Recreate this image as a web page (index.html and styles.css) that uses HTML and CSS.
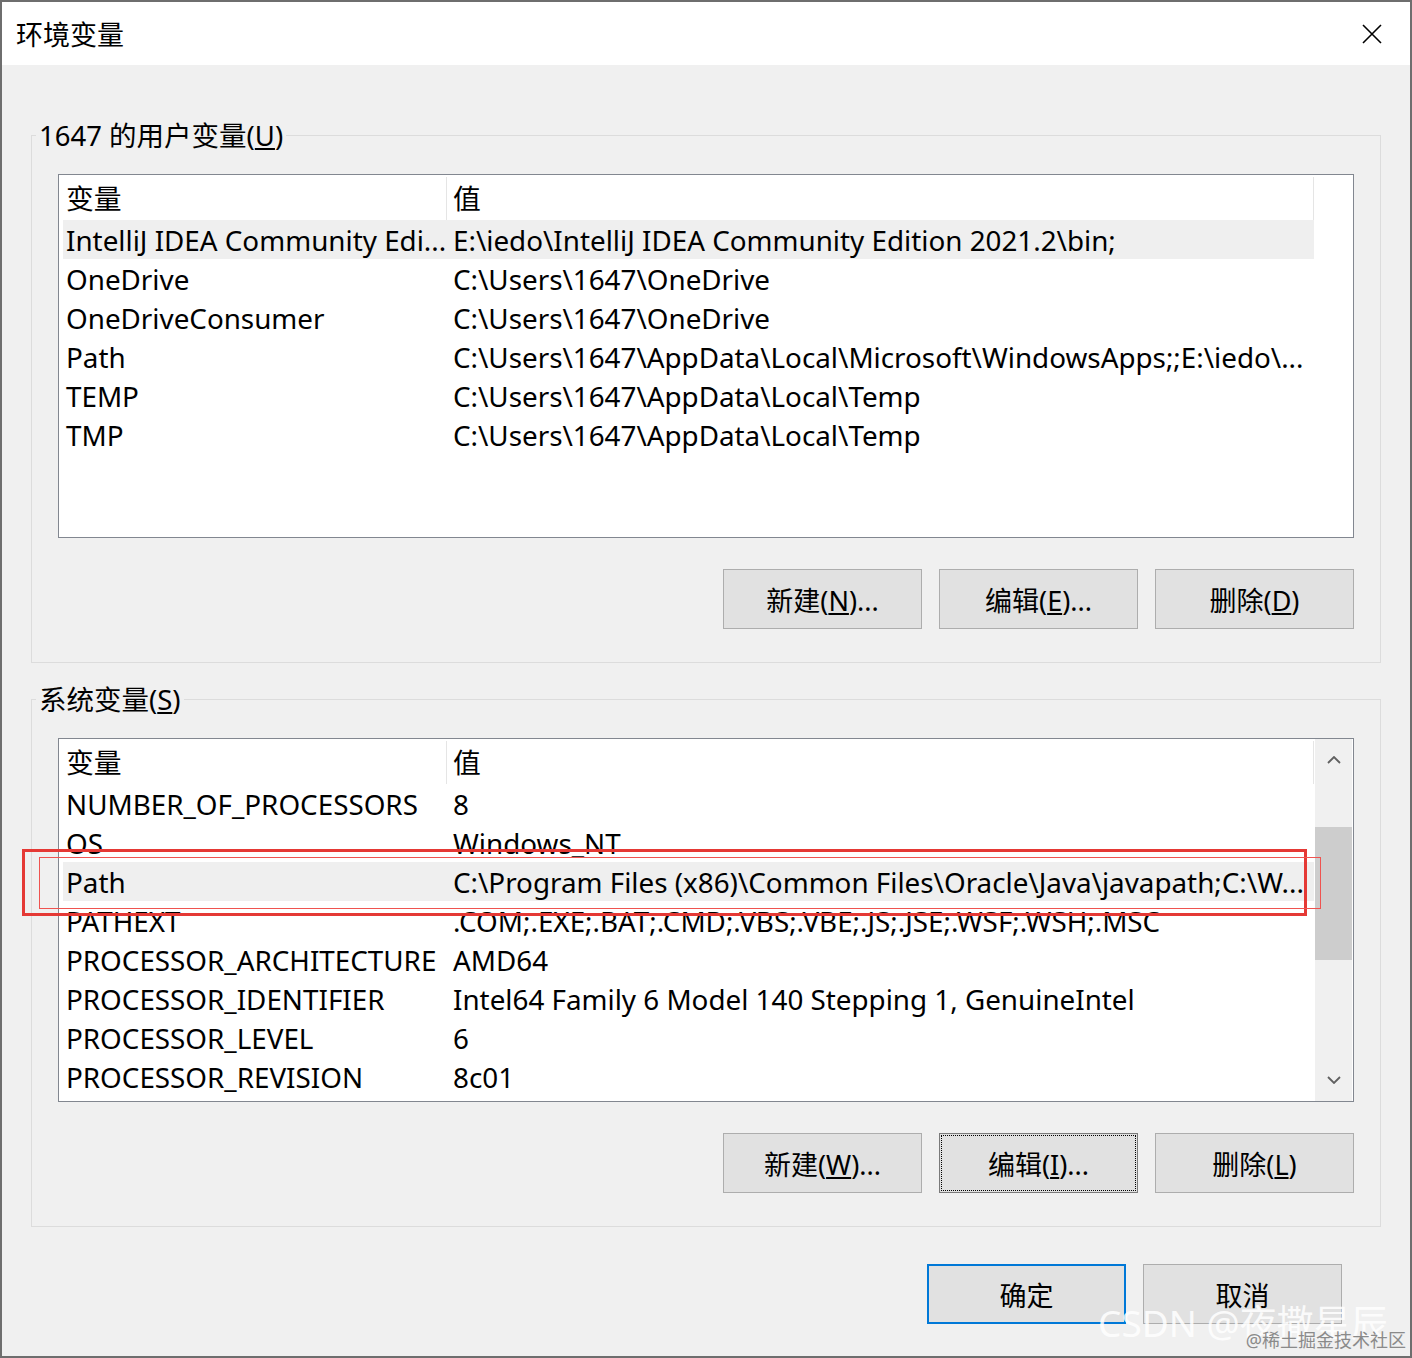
FILE: index.html
```html
<!DOCTYPE html>
<html lang="zh-CN">
<head>
  <meta charset="UTF-8" />
  <title>环境变量</title>
  <link rel="stylesheet" href="styles.css">
</head>
<body>
  <div class="window">
    <div class="titlebar">
      <span class="title">环境变量</span>
      <svg class="close" width="20" height="20" viewBox="0 0 20 20">
        <path d="M1 1 L19 19 M19 1 L1 19" stroke="#000" stroke-width="1.6" fill="none" />
      </svg>
    </div>

    <div class="dialog-body">
      <!-- User variables -->
      <fieldset class="group">
        <legend>1647 的用户变量(<u>U</u>)</legend>
        <div class="list">
          <div class="list-main">
            <div class="list-head">
              <div class="head-name">变量</div>
              <div class="head-value">值</div>
            </div>
            <div class="row selected"><span>IntelliJ IDEA Community Edi...</span><span>E:\iedo\IntelliJ IDEA Community Edition 2021.2\bin;</span></div>
            <div class="row"><span>OneDrive</span><span>C:\Users\1647\OneDrive</span></div>
            <div class="row"><span>OneDriveConsumer</span><span>C:\Users\1647\OneDrive</span></div>
            <div class="row"><span>Path</span><span>C:\Users\1647\AppData\Local\Microsoft\WindowsApps;;E:\iedo\...</span></div>
            <div class="row"><span>TEMP</span><span>C:\Users\1647\AppData\Local\Temp</span></div>
            <div class="row"><span>TMP</span><span>C:\Users\1647\AppData\Local\Temp</span></div>
          </div>
        </div>
        <div class="actions">
          <button class="btn">新建(<u>N</u>)...</button>
          <button class="btn">编辑(<u>E</u>)...</button>
          <button class="btn">删除(<u>D</u>)</button>
        </div>
      </fieldset>

      <!-- System variables -->
      <fieldset class="group">
        <legend>系统变量(<u>S</u>)</legend>
        <div class="list">
          <div class="list-main">
            <div class="list-head">
              <div class="head-name">变量</div>
              <div class="head-value">值</div>
            </div>
            <div class="row"><span>NUMBER_OF_PROCESSORS</span><span>8</span></div>
            <div class="row"><span>OS</span><span>Windows_NT</span></div>
            <div class="row selected"><span>Path</span><span>C:\Program Files (x86)\Common Files\Oracle\Java\javapath;C:\W...</span></div>
            <div class="row"><span>PATHEXT</span><span>.COM;.EXE;.BAT;.CMD;.VBS;.VBE;.JS;.JSE;.WSF;.WSH;.MSC</span></div>
            <div class="row"><span>PROCESSOR_ARCHITECTURE</span><span>AMD64</span></div>
            <div class="row"><span>PROCESSOR_IDENTIFIER</span><span>Intel64 Family 6 Model 140 Stepping 1, GenuineIntel</span></div>
            <div class="row"><span>PROCESSOR_LEVEL</span><span>6</span></div>
            <div class="row"><span>PROCESSOR_REVISION</span><span>8c01</span></div>
          </div>
          <div class="scrollbar">
            <div class="arrow">
              <svg width="14" height="8" viewBox="0 0 14 8"><path d="M1 7 L7 1 L13 7" stroke="#606060" stroke-width="1.8" fill="none" /></svg>
            </div>
            <div class="track"><div class="thumb"></div></div>
            <div class="arrow">
              <svg width="14" height="8" viewBox="0 0 14 8"><path d="M1 1 L7 7 L13 1" stroke="#606060" stroke-width="1.8" fill="none" /></svg>
            </div>
          </div>
        </div>
        <div class="actions">
          <button class="btn">新建(<u>W</u>)...</button>
          <button class="btn focused">编辑(<u>I</u>)...</button>
          <button class="btn">删除(<u>L</u>)</button>
        </div>
      </fieldset>

      <div class="footer">
        <button class="btn primary">确定</button>
        <button class="btn">取消</button>
      </div>
    </div>

    <!-- annotation boxes drawn over the Path row -->
    <div class="mark mark-outer"></div>
    <div class="mark mark-inner"></div>

    <div class="watermark">
      <span class="wm-csdn">CSDN @夜撒星辰</span>
      <span class="wm-juejin">@稀土掘金技术社区</span>
    </div>
  </div>
</body>
</html>
```

FILE: styles.css
```css
body {
  margin: 0;
  font-family: "Noto Sans", "Noto Sans CJK SC", sans-serif;
  font-size: 27px;
  color: #000;
}

.window {
  position: relative;
  width: 1412px;
  height: 1358px;
  box-sizing: border-box;
  border: 2px solid #6e6e6e;
  background: #f0f0f0;
  overflow: hidden;
}

.titlebar {
  height: 63px;
  background: #fff;
  display: flex;
  align-items: center;
  justify-content: space-between;
  padding: 0 28px 0 14px;
}

.title {
  font-size: 27px;
}

.dialog-body {
  padding: 0 29px;
}

.group {
  margin: 52px 0 0;
  padding: 21px 26px 33px;
  border: 1px solid #dcdcdc;
  min-width: 0;
}

.group + .group {
  margin-top: 18px;
}

.group legend {
  margin-left: -22px;
  padding: 1px 3px 0;
  line-height: 35px;
  font-size: 27.5px;
}

.list {
  height: 364px;
  box-sizing: border-box;
  border: 1px solid #828790;
  background: #fff;
  display: flex;
  font-size: 27.8px;
}

.list-main {
  width: 1255px;
  flex: none;
}

.list-head {
  height: 45px;
  box-sizing: border-box;
  padding-top: 2px;
  display: flex;
  line-height: 43px;
}

.head-name {
  width: 380px;
  padding-left: 7px;
  border-right: 1px solid #e5e5e5;
}

.head-value {
  flex: 1;
  padding-left: 6px;
  border-right: 1px solid #e5e5e5;
}

.row {
  margin-left: 4px;
  height: 39px;
  box-sizing: border-box;
  padding-top: 1px;
  line-height: 38px;
  display: grid;
  grid-template-columns: 383px 1fr;
  white-space: nowrap;
}

.row span:first-child {
  padding-left: 3px;
}

.row span:last-child {
  padding-left: 7px;
}

.row.selected {
  background: #efefef;
}

.scrollbar {
  width: 37px;
  margin-left: 1px;
  background: #f0f0f0;
  display: flex;
  flex-direction: column;
}

.arrow {
  height: 42px;
  display: flex;
  align-items: center;
  justify-content: center;
}

.track {
  flex: 1;
}

.thumb {
  margin-top: 46px;
  height: 133px;
  background: #cdcdcd;
}

.actions {
  margin-top: 31px;
  display: flex;
  justify-content: flex-end;
  gap: 17px;
}

.btn {
  width: 199px;
  height: 60px;
  box-sizing: border-box;
  border: 1px solid #adadad;
  background: #e1e1e1;
  font-family: "Noto Sans", "Noto Sans CJK SC", sans-serif;
  font-size: 27px;
  color: #000;
  padding: 0;
}

.btn.focused {
  border-color: #7a7a7a;
  outline: 1px dotted #000;
  outline-offset: -3px;
}

.btn.primary {
  border: 2px solid #0078d7;
}

.footer {
  margin-top: 37px;
  padding-right: 39px;
  display: flex;
  justify-content: flex-end;
  gap: 17px;
}

.mark {
  position: absolute;
  box-sizing: border-box;
}

.mark-outer {
  left: 20px;
  top: 847px;
  width: 1285px;
  height: 67px;
  border: 3px solid #e53935;
}

.mark-inner {
  left: 37px;
  top: 855px;
  width: 1282px;
  height: 52px;
  border: 1px solid #ef5350;
}

.watermark {
  position: absolute;
  right: 0;
  bottom: 0;
  width: 312px;
  height: 58px;
}

.wm-csdn {
  position: absolute;
  left: 0;
  top: -4px;
  font-size: 37px;
  color: rgba(255, 255, 255, 0.85);
  white-space: nowrap;
}

.wm-juejin {
  position: absolute;
  right: 4px;
  bottom: 4px;
  font-size: 18px;
  color: #8a8a8a;
  white-space: nowrap;
}
```
